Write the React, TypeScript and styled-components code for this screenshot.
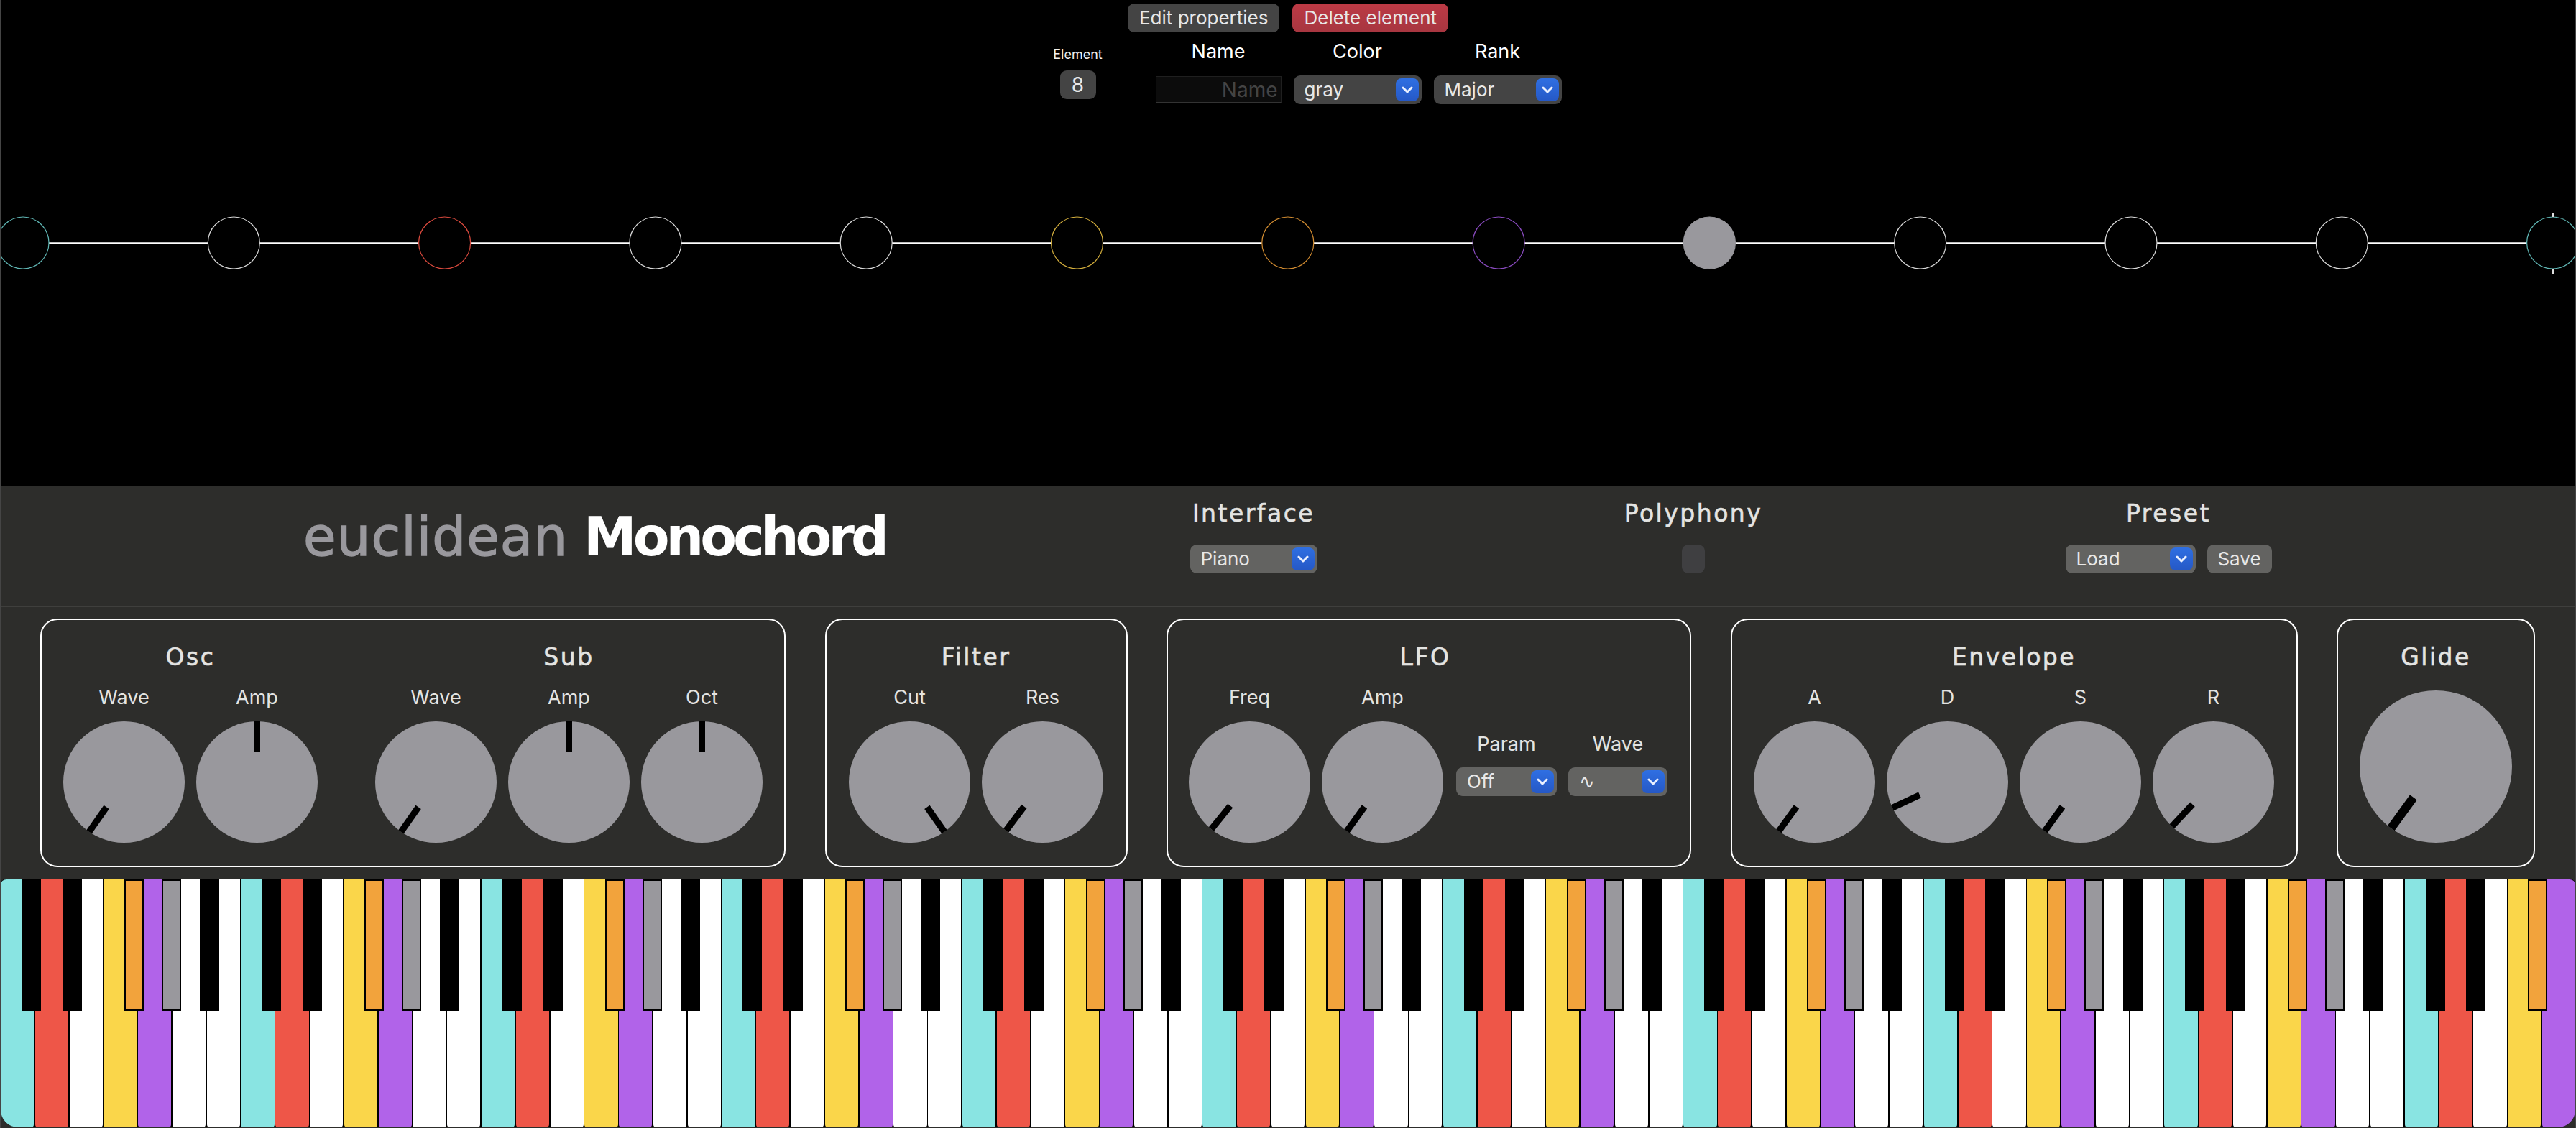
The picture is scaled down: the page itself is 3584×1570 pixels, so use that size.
import React from 'react';
import styled, { createGlobalStyle } from 'styled-components';

const UI_FONT = `Inter, "Open Sans", "Liberation Sans", sans-serif`;
const DISPLAY_FONT = `"DejaVu Sans", "Liberation Sans", sans-serif`;

const NOTE_COLORS = {
  teal: '#89e4e2',
  red: '#ee5648',
  yellow: '#fad64a',
  orange: '#f2a33c',
  purple: '#b163e9',
  gray: '#99989d',
  white: '#ffffff',
  black: '#000000'
};

const GlobalStyle = createGlobalStyle`
  html, body {
    margin: 0;
    padding: 0;
    background: #000;
    overflow: hidden;
  }
`;

const Frame = styled.div`
  width: 3584px;
  height: 1570px;
  box-sizing: border-box;
  border-left: 2px solid #454545;
  border-right: 2px solid #454545;
  display: flex;
  flex-direction: column;
  background: #2d2d2b;
  font-family: ${UI_FONT};
  color: #e4e4e2;
`;

/* element editor + ring */
const Stage = styled.div`
  height: 677px;
  background: #000;
  flex: none;
`;

const ButtonRow = styled.div`
  display: flex;
  justify-content: center;
  gap: 18px;
  padding-top: 5px;
`;

const ActionButton = styled.button<{ $danger?: boolean }>`
  height: 40px;
  padding: 0 16px 2px;
  border: none;
  border-radius: 9px;
  background: ${p => (p.$danger ? 'linear-gradient(#bc3a45, #a73640)' : '#444444')};
  color: #e8e8e8;
  font-family: ${UI_FONT};
  font-size: 26px;
  white-space: nowrap;
`;

const EditorRow = styled.div`
  display: flex;
  justify-content: center;
  padding-left: 53px;
`;

const ElementColumn = styled.div`
  width: 70px;
  margin-right: 73px;
  display: flex;
  flex-direction: column;
  align-items: center;
  padding-top: 20px;
`;

const ElementLabel = styled.div`
  font-size: 18px;
  line-height: 22px;
  color: #f2f2f2;
  white-space: nowrap;
`;

const ElementBadge = styled.div`
  width: 50px;
  height: 40px;
  margin-top: 11px;
  border-radius: 9px;
  background: #444444;
  color: #e8e8e8;
  font-size: 28px;
  display: flex;
  align-items: center;
  justify-content: center;
`;

const EditorField = styled.div<{ $width: number }>`
  width: ${p => p.$width}px;
  margin-right: 17px;
  display: flex;
  flex-direction: column;
  align-items: center;
  &:last-child {
    margin-right: 0;
  }
`;

const FieldLabel = styled.div`
  height: 40px;
  margin-top: 7px;
  margin-bottom: 13px;
  font-size: 27px;
  line-height: 40px;
  color: #fff;
`;

const NameInput = styled.input`
  width: 175px;
  height: 37px;
  margin-top: 1px;
  box-sizing: border-box;
  padding: 0 4px;
  border: 1px solid #1f1f1f;
  border-bottom-color: #333;
  background: #0c0c0c;
  color: #ddd;
  font-family: ${UI_FONT};
  font-size: 28px;
  text-align: right;
  outline: none;
  &::placeholder {
    color: #444;
  }
`;

const SelectShell = styled.div<{ $width: number; $dark?: boolean }>`
  position: relative;
  width: ${p => p.$width}px;
  height: 40px;
  flex: none;
  border-radius: 9px;
  background: ${p => (p.$dark ? '#444444' : '#636361')};
`;

const NativeSelect = styled.select`
  appearance: none;
  -webkit-appearance: none;
  width: 100%;
  height: 100%;
  padding: 0 0 2px 15px;
  border: none;
  outline: none;
  background: transparent;
  color: #e8e8e8;
  font-family: ${UI_FONT};
  font-size: 26px;
`;

const SelectArrow = styled.span`
  position: absolute;
  top: 4px;
  right: 4px;
  width: 32px;
  height: 32px;
  border-radius: 8px;
  background: linear-gradient(#2f6fe2, #2558c6);
  display: flex;
  align-items: center;
  justify-content: center;
  pointer-events: none;
`;

const Ring = styled.svg`
  display: block;
  margin-top: 145px;
`;

/* header */
const HeaderBar = styled.div`
  height: 168px;
  flex: none;
  box-sizing: border-box;
  border-bottom: 2px solid #3f3f3d;
  display: grid;
  grid-template-columns: 1650px 184px 1040px 282px;
  padding-top: 18px;
`;

const Title = styled.div`
  justify-self: center;
  margin-top: 7px;
  font-family: ${DISPLAY_FONT};
  font-size: 74px;
  line-height: 90px;
  white-space: nowrap;
  color: #99989d;
  display: flex;
  gap: 22px;
`;

const TitleLight = styled.span`
  letter-spacing: 1px;
  -webkit-text-stroke: 1.5px #99989d;
`;

const TitleStrong = styled.span`
  color: #fff;
  font-weight: 700;
  letter-spacing: -5px;
`;

const HeaderGroup = styled.div`
  display: flex;
  flex-direction: column;
  align-items: center;
  gap: 23px;
`;

const SectionLabel = styled.div`
  font-family: ${DISPLAY_FONT};
  font-size: 33px;
  line-height: 40px;
  letter-spacing: 2.5px;
  -webkit-text-stroke: 0.6px #e4e4e2;
  color: #e4e4e2;
  white-space: nowrap;
`;

const HeaderControls = styled.div`
  display: flex;
  gap: 16px;
`;

const SaveButton = styled.button`
  width: 90px;
  height: 40px;
  padding-bottom: 2px;
  border: none;
  border-radius: 9px;
  background: #636361;
  color: #e8e8e8;
  font-family: ${UI_FONT};
  font-size: 26px;
`;

const ToggleBox = styled.div`
  width: 32px;
  height: 40px;
  border-radius: 9px;
  background: #3f3f41;
`;

/* synth panels */
const PanelRow = styled.div`
  flex: none;
  height: 378px;
  box-sizing: border-box;
  padding: 16px 0 16px 54px;
  display: flex;
  gap: 54.5px;
`;

const Panel = styled.div<{ $width: number; $padLeft?: number }>`
  width: ${p => p.$width}px;
  height: 346px;
  flex: none;
  box-sizing: border-box;
  border: 2px solid #fff;
  border-radius: 24px;
  padding: 32px 0 0 ${p => p.$padLeft ?? 0}px;
  display: flex;
  justify-content: ${p => (p.$padLeft ? 'flex-start' : 'center')};
  gap: 64px;
`;

const Group = styled.div`
  display: flex;
  flex-direction: column;
  align-items: center;
`;

const GroupBody = styled.div<{ $gap?: number }>`
  display: flex;
  margin-top: ${p => p.$gap ?? 18}px;
`;

const KnobColumn = styled.div`
  width: 185px;
  display: flex;
  flex-direction: column;
  align-items: center;
`;

const KnobLabel = styled.div`
  font-size: 27px;
  line-height: 36px;
  color: #e4e4e2;
`;

const KnobDial = styled.div<{ $size: number; $top: number }>`
  position: relative;
  width: ${p => p.$size}px;
  height: ${p => p.$size}px;
  margin-top: ${p => p.$top}px;
  border-radius: 50%;
  background: #99989d;
`;

const KnobPointer = styled.div<{ $size: number; $angle: number }>`
  position: absolute;
  top: 0;
  left: 50%;
  width: ${p => Math.round(p.$size * 0.055)}px;
  height: 25%;
  margin-left: -${p => Math.round(p.$size * 0.055) / 2}px;
  background: #000;
  transform-origin: 50% 200%;
  transform: rotate(${p => p.$angle}deg);
`;

const SelectColumn = styled.div<{ $width: number; $left: number }>`
  width: ${p => p.$width}px;
  margin-left: ${p => p.$left}px;
  padding-top: 65px;
  display: flex;
  flex-direction: column;
  align-items: center;
  gap: 14px;
`;

/* keyboard */
const Keyboard = styled.div`
  position: relative;
  flex: none;
  height: 346px;
  margin: 0 -1px;
  box-sizing: border-box;
  border-top: 1px solid #000;
  background: #000;
  border-radius: 8px 8px 24px 24px;
  display: flex;
  gap: 1.5px;
  overflow: hidden;
`;

const WhiteKey = styled.div<{ $color: string }>`
  flex: 1;
  background: ${p => p.$color};
  border-radius: 0 0 4px 4px;
`;

const BlackKey = styled.div<{ $color: string }>`
  position: absolute;
  top: 0;
  width: 27px;
  height: 183px;
  box-sizing: border-box;
  border: 2px solid #000;
  background: ${p => p.$color};
`;

const Chevron = () => (
  <svg width="16" height="10" viewBox="0 0 16 10">
    <path d="M2 2l6 6 6-6" fill="none" stroke="#eaf0ff" strokeWidth="3" strokeLinecap="round" strokeLinejoin="round" />
  </svg>
);

const Select = ({ width, options, dark }: { width: number; options: string[]; dark?: boolean }) => (
  <SelectShell $width={width} $dark={dark}>
    <NativeSelect defaultValue={options[0]}>
      {options.map(o => (
        <option key={o} value={o}>{o}</option>
      ))}
    </NativeSelect>
    <SelectArrow>
      <Chevron />
    </SelectArrow>
  </SelectShell>
);

const Knob = ({ label, angle, size = 169 }: { label?: string; angle: number; size?: number }) => (
  <KnobColumn>
    {label && <KnobLabel>{label}</KnobLabel>}
    <KnobDial $size={size} $top={15}>
      <KnobPointer $size={size} $angle={angle} />
    </KnobDial>
  </KnobColumn>
);

const RING_COLORS = [
  '#5fb5b3', '#d8d8d8', '#d9493d', '#d8d8d8', '#d8d8d8', '#d2ad3c', '#cf8a30',
  '#8a4bc0', '#99989d', '#d8d8d8', '#d8d8d8', '#d8d8d8', '#5fb5b3'
];
const RING_START = 32;
const RING_STEP = 293.3;

const WHITE_COLORS = ['teal', 'red', 'white', 'yellow', 'purple', 'white', 'white'] as const;
const BLACK_KEYS = [
  { pos: 0.607, color: 'black' },
  { pos: 1.795, color: 'black' },
  { pos: 3.595, color: 'orange' },
  { pos: 4.684, color: 'gray' },
  { pos: 5.794, color: 'black' }
] as const;
const WHITE_COUNT = 75;
const WHITE_WIDTH = 3583.5 / WHITE_COUNT;

const blackKeys = Array.from({ length: 11 }).flatMap((_, octave) =>
  BLACK_KEYS.map(k => ({ ...k, index: octave * 7 + k.pos })).filter(k => k.index < WHITE_COUNT - 1)
);

const App: React.FC = () => {
  return (
    <Frame>
      <GlobalStyle />
      <Stage>
        <ButtonRow>
          <ActionButton>Edit properties</ActionButton>
          <ActionButton $danger>Delete element</ActionButton>
        </ButtonRow>
        <EditorRow>
          <ElementColumn>
            <ElementLabel>Element</ElementLabel>
            <ElementBadge>8</ElementBadge>
          </ElementColumn>
          <EditorField $width={175}>
            <FieldLabel>Name</FieldLabel>
            <NameInput placeholder="Name" />
          </EditorField>
          <EditorField $width={178}>
            <FieldLabel>Color</FieldLabel>
            <Select width={178} options={['gray', 'red', 'teal']} dark />
          </EditorField>
          <EditorField $width={178}>
            <FieldLabel>Rank</FieldLabel>
            <Select width={178} options={['Major', 'Minor']} dark />
          </EditorField>
        </EditorRow>
        <Ring width={3580} height={100} viewBox="2 290 3580 100">
          <line x1="0" y1="338.5" x2="3584" y2="338.5" stroke="#fff" strokeWidth="2.4" />
          {RING_COLORS.map((color, i) => (
            <circle
              key={i}
              cx={RING_START + i * RING_STEP}
              cy="338"
              r="36"
              fill={i === 8 ? color : '#000'}
              stroke={color}
              strokeWidth="1.2"
            />
          ))}
          <line x1="3552" y1="296" x2="3552" y2="302" stroke="#ddd" strokeWidth="2" />
          <line x1="3552" y1="374" x2="3552" y2="381" stroke="#ddd" strokeWidth="2" />
        </Ring>
      </Stage>

      <HeaderBar>
        <Title>
          <TitleLight>euclidean</TitleLight>
          <TitleStrong>Monochord</TitleStrong>
        </Title>
        <HeaderGroup>
          <SectionLabel>Interface</SectionLabel>
          <Select width={177} options={['Piano', 'Strings']} />
        </HeaderGroup>
        <HeaderGroup>
          <SectionLabel>Polyphony</SectionLabel>
          <ToggleBox />
        </HeaderGroup>
        <HeaderGroup>
          <SectionLabel>Preset</SectionLabel>
          <HeaderControls>
            <Select width={181} options={['Load', 'Default']} />
            <SaveButton>Save</SaveButton>
          </HeaderControls>
        </HeaderGroup>
      </HeaderBar>

      <PanelRow>
        <Panel $width={1037} $padLeft={22}>
          <Group>
            <SectionLabel>Osc</SectionLabel>
            <GroupBody>
              <Knob label="Wave" angle={-145} />
              <Knob label="Amp" angle={0} />
            </GroupBody>
          </Group>
          <Group>
            <SectionLabel>Sub</SectionLabel>
            <GroupBody>
              <Knob label="Wave" angle={-145} />
              <Knob label="Amp" angle={0} />
              <Knob label="Oct" angle={0} />
            </GroupBody>
          </Group>
        </Panel>
        <Panel $width={421}>
          <Group>
            <SectionLabel>Filter</SectionLabel>
            <GroupBody>
              <Knob label="Cut" angle={145} />
              <Knob label="Res" angle={-143} />
            </GroupBody>
          </Group>
        </Panel>
        <Panel $width={730} $padLeft={21}>
          <Group>
            <SectionLabel>LFO</SectionLabel>
            <GroupBody>
              <Knob label="Freq" angle={-141} />
              <Knob label="Amp" angle={-144} />
              <SelectColumn $width={140} $left={10}>
                <KnobLabel>Param</KnobLabel>
                <Select width={140} options={['Off', 'Cut', 'Amp']} />
              </SelectColumn>
              <SelectColumn $width={138} $left={16}>
                <KnobLabel>Wave</KnobLabel>
                <Select width={138} options={['∿', '⊓']} />
              </SelectColumn>
            </GroupBody>
          </Group>
        </Panel>
        <Panel $width={789}>
          <Group>
            <SectionLabel>Envelope</SectionLabel>
            <GroupBody>
              <Knob label="A" angle={-144} />
              <Knob label="D" angle={-115} />
              <Knob label="S" angle={-144} />
              <Knob label="R" angle={-137} />
            </GroupBody>
          </Group>
        </Panel>
        <Panel $width={276}>
          <Group>
            <SectionLabel>Glide</SectionLabel>
            <GroupBody $gap={11}>
              <Knob angle={-144} size={212} />
            </GroupBody>
          </Group>
        </Panel>
      </PanelRow>

      <Keyboard>
        {Array.from({ length: WHITE_COUNT }).map((_, i) => (
          <WhiteKey key={i} $color={NOTE_COLORS[WHITE_COLORS[i % 7]]} />
        ))}
        {blackKeys.map(k => (
          <BlackKey key={k.index} $color={NOTE_COLORS[k.color]} style={{ left: k.index * WHITE_WIDTH }} />
        ))}
      </Keyboard>
    </Frame>
  );
};

export default App;
